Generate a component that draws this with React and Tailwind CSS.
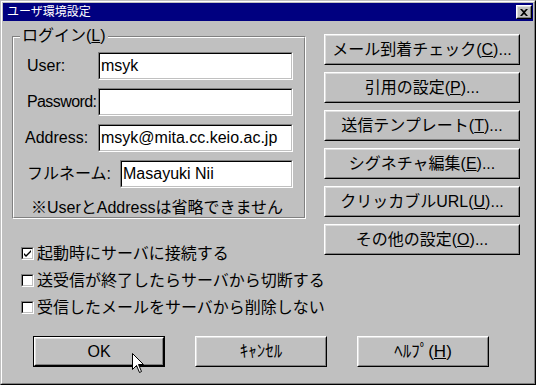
import React from 'react'

const Raised = ({ children, className = '' }) => (
    <div className={`border border-t-white border-l-white border-r-black border-b-black ${className}`}>
        <div className="h-full w-full border border-t-[#dfdfdf] border-l-[#dfdfdf] border-r-[#808080] border-b-[#808080] flex items-center justify-center">
            {children}
        </div>
    </div>
)

const Sunken = ({ children, className = '' }) => (
    <div className={`border border-t-[#808080] border-l-[#808080] border-r-white border-b-white ${className}`}>
        <div className="h-full w-full border border-t-black border-l-black border-r-[#c0c0c0] border-b-[#c0c0c0] bg-white flex items-center">
            {children}
        </div>
    </div>
)

const Field = ({ label, value, width, labelClass = '' }) => (
    <div className="flex items-center h-[28px] pl-[13px] pr-[11px]">
        <span className={labelClass}>{label}</span>
        <Sunken className={`ml-auto h-[28px] ${width}`}>
            <span className="pl-[1px] leading-none">{value}</span>
        </Sunken>
    </div>
)

const Check = ({ checked, label }) => (
    <div className="flex items-center h-[27px] ml-[9px] whitespace-nowrap">
        <Sunken className="w-[13px] h-[13px] shrink-0">
            {checked && (
                <svg width="9" height="9" viewBox="0 0 9 9" className="block">
                    <path d="M1 4 L1 6 L3 8 L8 3 L8 1 L3 6 Z" fill="black" />
                </svg>
            )}
        </Sunken>
        <span className="ml-[3px]">{label}</span>
    </div>
)

const sideButtons = [
    ['メール到着チェック(', 'C', ')...'],
    ['引用の設定(', 'P', ')...'],
    ['送信テンプレート(', 'T', ')...'],
    ['シグネチャ編集(', 'E', ')...'],
    ['クリッカブルURL(', 'U', ')...'],
    ['その他の設定(', 'O', ')...'],
]

export default function App() {
    return (
        <div className="w-[536px] h-[385px] border border-t-[#c0c0c0] border-l-[#c0c0c0] border-r-black border-b-black bg-[#c0c0c0] text-black text-[16px] font-['Liberation_Sans','Noto_Sans_CJK_JP',sans-serif] relative overflow-hidden">
            <div className="h-full w-full border border-t-white border-l-white border-r-[#808080] border-b-[#808080] p-[1px] flex flex-col">
                {/* title bar */}
                <div className="h-[18px] bg-[#000080] flex items-center justify-between pl-[4px] pr-[1px] shrink-0">
                    <span className="text-white text-[12px] leading-none">ユーザ環境設定</span>
                    <Raised className="w-[16px] h-[14px] bg-[#c0c0c0]">
                        <svg width="8" height="7" viewBox="0 0 8 7" className="block">
                            <path d="M0 0h2l2 2 2-2h2L5 3.5 8 7H6L4 5 2 7H0l3-3.5z" fill="black" />
                        </svg>
                    </Raised>
                </div>

                <div className="flex">
                    {/* left column */}
                    <div className="w-[294px] ml-[9px] mt-[15px]">
                        <div className="relative h-[183px] border border-t-[#808080] border-l-[#808080] border-r-white border-b-white">
                            <div className="h-full border border-t-white border-l-white border-r-[#808080] border-b-[#808080] pt-[14px] flex flex-col gap-[8px]">
                                <Field label="User:" value="msyk" width="w-[195px]" />
                                <Field label="Password:" value="" width="w-[195px]" labelClass="tracking-[-0.6px]" />
                                <Field label="Address:" value="msyk@mita.cc.keio.ac.jp" width="w-[195px]" labelClass="-ml-[2px]" />
                                <Field label="フルネーム:" value="Masayuki Nii" width="w-[173px]" />
                                <div className="text-center mt-[2px] leading-[20px] pr-[4px]">※UserとAddressは省略できません</div>
                            </div>
                            <span className="absolute left-[7px] top-[-11px] px-[2px] bg-[#c0c0c0] leading-[20px]">
                                ログイン(<u>L</u>)
                            </span>
                        </div>
                        <div className="mt-[21px]">
                            <Check checked label="起動時にサーバに接続する" />
                            <Check label="送受信が終了したらサーバから切断する" />
                            <Check label="受信したメールをサーバから削除しない" />
                        </div>
                    </div>

                    {/* right column */}
                    <div className="ml-[18px] mt-[13px] w-[196px] flex flex-col gap-[7px]">
                        {sideButtons.map(([a, k, b]) => (
                            <Raised key={k} className="h-[31px]">
                                <span className="whitespace-nowrap">{a}<u>{k}</u>{b}</span>
                            </Raised>
                        ))}
                    </div>
                </div>

                {/* bottom buttons */}
                <div className="flex gap-[30px] pl-[30px] mt-[15px]">
                    <div className="border border-black w-[132px] h-[31px]">
                        <Raised className="h-full">OK</Raised>
                    </div>
                    <Raised className="w-[132px] h-[31px]"><span className="text-[17px]">ｷｬﾝｾﾙ</span></Raised>
                    <Raised className="w-[132px] h-[31px]"><span className="text-[17px]">ﾍﾙﾌﾟ(<u>H</u>)</span></Raised>
                </div>
            </div>

            {/* mouse pointer */}
            <svg width="13" height="21" viewBox="0 0 13 21" className="absolute left-[131px] top-[352px]">
                <path d="M0.5 0.5 L0.5 16.5 L4.5 12.5 L7.5 19.5 L9.5 18.5 L6.5 11.5 L11.5 11.5 Z" fill="white" stroke="black" strokeWidth="1" />
            </svg>
        </div>
    )
}
